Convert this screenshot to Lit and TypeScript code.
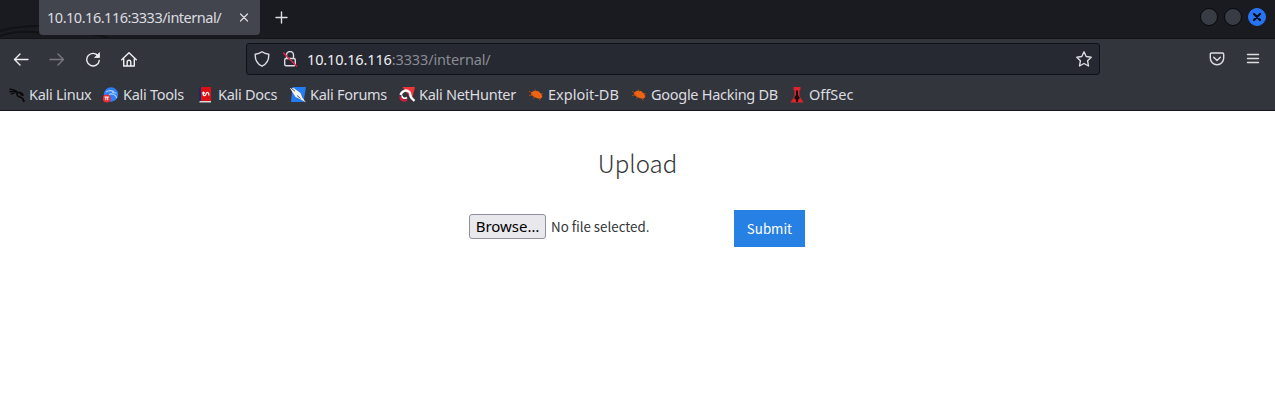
import { LitElement, html, css, svg } from "lit";
import { customElement } from "lit/decorators.js";

const kali = svg`<path d="M.5 2l4 .8 4 2M.3 4.500l5 .2M1.500 7.200l4-1.200" fill="none" stroke="#08090b" stroke-width="1.300"/><path d="M4 4c3 .2 3.500 1 4 2.200 0 3 1 3.300 3 3.800 2 .5 3.300 2 4 5M9 5.800c2-.8 3.500-.2 5 2.200l-2.700-.6" fill="none" stroke="#08090b" stroke-width="1.800"/>`;
const tools = svg`<circle cx="8" cy="7.500" r="7.200" fill="#2f80f5"/><path d="M3 5c3-2 6-1.500 8-.2M6 7.500c2-1.200 3.500-.7 5 0 1.500.6 2.300 1.600 2.700 3.700M9 5l4.500 1.300" fill="none" stroke="#a9cef9" stroke-width="1.100"/><circle cx="3.700" cy="11.500" r="4" fill="#ee2b31"/><path d="M1.500 10h4.400M2.800 10v3.200M4.700 10v3.200" stroke="#fff" stroke-width="1" fill="none"/>`;
const docs = svg`<path d="M1 0h2.500v15H1z" fill="#182c6b"/><path d="M3 0h10v14H3z" fill="#dd1016"/><path d="M1.500 14H13v1.500H1.500z" fill="#dad8d8"/><path d="M5.300 5.500c-.8 4 2.500 4 2.700 1.500.2-2.500 3.500-2 2.700 1.500M4.300 6.500l1.200-1.300 1.300 1.300" fill="none" stroke="#fff" stroke-width="1.200"/>`;
const forums = svg`<path d="M2.500 0H16l-2.500 15H1z" fill="#237cf2"/><path d="M0 1l4 .2L10.500 6l1.700 4.500 3.800 5-5.500-3.300-5-2.200L3 6z" fill="#f5f5f5"/><path d="M1 1.200l4 3M7 8.500l3.500 2.800" stroke="#303238" stroke-width=".8"/>`;
const hunter = svg`<path d="M3.500 0H16l-3 12-4-4z" fill="#f1333b"/><path d="M1.500 8C3 3.500 7.500 2.500 10.200 4.800c1.800 1.700.5 4.200 2.300 6.200 1 1.200 2 1.700 3 3" fill="none" stroke="#fff" stroke-width="2.400"/><path d="M1.500 9.500c0 4 3.500 4.700 6.500 3.200" fill="none" stroke="#d9163e" stroke-width="2.400"/><path d="M3 8.500c0 3 3 3.300 5 2" fill="none" stroke="#fff" stroke-width="1.600"/><path d="M5 7.800c1.500-1.300 3.500-1.300 4 .5" fill="none" stroke="#33353c" stroke-width="1.300"/>`;
const bug = svg`<path d="M3 5.500l3-1.700 4 .2 3.500 3 .8 3-1.800 1.700-3.500-.5-4-2L3 7.500z" fill="#ef6412"/><path d="M1 4.200l3 2M7 2.300l1 2M1 8.500l4-.4M5 11.500l2-1.300M11 12l1.500 1.500M13 7l2-.3" stroke="#a94b18" stroke-width=".9"/>`;
const offsec = svg`<path d="M4.500 0h7v2.500l-1 1v5.500l4 6.500h-13l4-6.500V3.500l-1-1z" fill="#df2329"/><path d="M7 3.500h2v4.500l1.800 3-1.800 2V15H7v-2l-1.800-2L7 8z" fill="#180c10"/>`;

const bookmarks = [
  { name: "Kali Linux", icon: kali, width: 94 },
  { name: "Kali Tools", icon: tools, width: 95 },
  { name: "Kali Docs", icon: docs, width: 92 },
  { name: "Kali Forums", icon: forums, width: 109 },
  { name: "Kali NetHunter", icon: hunter, width: 129 },
  { name: "Exploit-DB", icon: bug, width: 103, wide: true },
  { name: "Google Hacking DB", icon: bug, width: 158 },
  { name: "OffSec", icon: offsec, width: 80, wide: true },
];

@customElement("app-root")
export class AppRoot extends LitElement {
  static styles = css`
    :host { display: block; height: 400px; background: #fff; font-family: "Noto Sans", sans-serif; font-size: 14.500px; line-height: 20px; color: #dcdde0; overflow: hidden; }
    * { box-sizing: border-box; }
    svg { display: block; flex: none; fill: none; stroke: currentColor; stroke-width: 1.400; stroke-linecap: round; stroke-linejoin: round; }
    .tabs { position: relative; display: flex; height: 39px; background: #1a1b20; border-bottom: 1px solid #131418; padding-left: 39px; }
    .swirl { position: absolute; left: 0; top: 0; color: #111216; }
    .tab { position: relative; display: flex; align-items: center; justify-content: space-between; width: 221px; height: 35px; padding: 0 11px 0 8px; background: #42454d; border-radius: 0 0 4px 4px; letter-spacing: -.48px; }
    .title, .label { padding-bottom: 2px; }
    .new { margin: 11px 0 0 15px; }
    .controls { display: flex; gap: 6px; margin: 8px 9px 0 auto; }
    .dot { width: 18px; height: 18px; border-radius: 50%; background: #383c45; border: 1px solid #08090b; }
    .close { background: #2774f2; border-color: #2774f2; color: #080d18; }
    .toolbar { display: flex; align-items: center; height: 41px; padding-bottom: 1px; background: #33353c; }
    .nav { display: flex; gap: 20px; width: 246px; padding-left: 13px; color: #f0f0f3; }
    .nav .off { color: #777980; }
    .address { display: flex; align-items: center; width: 854px; height: 32px; padding: 0 7px 0 7px; border: 1px solid #0f1118; border-radius: 3px; background: #262832; }
    .lock { margin-left: 12px; }
    .url { margin-left: 9px; padding-bottom: 1px; color: #f0f0f3; letter-spacing: -.13px; }
    .rest { color: #8a8c93; }
    .star { margin-left: auto; }
    .right { display: flex; gap: 20px; margin-left: 109px; }
    .bookmarks { display: flex; height: 31px; padding-left: 9px; background: #33353c; border-bottom: 1px solid #14151a; letter-spacing: -.28px; }
    .mark { display: flex; align-items: center; gap: 4px; height: 30px; white-space: nowrap; }
    .wide { letter-spacing: 0; }
    .icon { stroke: none; stroke-linecap: butt; }
    .page { display: flex; flex-direction: column; align-items: center; color: #333639; font-family: "Noto Sans CJK SC", sans-serif; }
    h1 { margin: 34px 0 0; font-size: 24px; line-height: 36px; font-weight: 300; }
    .form { display: flex; width: 337px; margin: 29px 0 0; padding-right: 1px; align-items: flex-start; }
    button { font: inherit; padding: 0; white-space: nowrap; }
    .browse { width: 77px; height: 25px; margin-top: 4px; border: 1px solid #8f8f9d; border-radius: 3px; background: #e9e9ed; color: #000; font-family: "Noto Sans", sans-serif; font-size: 15px; line-height: 21px; }
    .status { margin: 4px 0 0 5px; font-size: 13.333px; line-height: 25px; }
    .submit { width: 71px; height: 37px; margin-left: auto; border: 0; background: #2780e3; color: #fff; font-size: 13.333px; }
  `;

  render() {
    return html`
      <div class="tabs">
        <svg class="swirl" width="120" height="38" viewBox="0 0 120 38"><path d="M0 31c12-4 26-5 42-5M0 36c14-5 28-5 42-3M90 34q10 1 18 4" stroke-width="2"/></svg>
        <div class="tab"><span class="title">10.10.16.116:3333/internal/</span>
          <svg width="10" height="10" viewBox="0 0 10 10"><path d="M1.500 1l7 7m0-7l-7 7" stroke-width="1.200"/></svg></div>
        <svg class="new" width="13" height="13" viewBox="0 0 13 13"><path d="M6.500 1v11M1 6.500h11"/></svg>
        <div class="controls"><span class="dot"></span><span class="dot"></span>
          <span class="dot close"><svg width="16" height="16" viewBox="0 0 16 16"><path d="M5 5l6 6m0-6l-6 6" stroke-width="2.200"/></svg></span></div>
      </div>
      <div class="toolbar">
        <div class="nav">
          <svg width="16" height="16" viewBox="0 0 16 16"><path d="M15 8.500H1.500M7 3L1.500 8.500 7 14"/></svg>
          <svg class="off" width="16" height="16" viewBox="0 0 16 16"><path d="M1 8.500h13.500M9 3l5.500 5.500L9 14"/></svg>
          <svg width="16" height="16" viewBox="0 0 16 16"><path d="M13.200 5A6.300 6.300 0 1 0 14.300 9.500"/><path d="M14.500 2v4.500H10z" fill="currentColor" stroke-width=".8"/></svg>
          <svg width="16" height="16" viewBox="0 0 16 16"><path d="M.7 8.700l7.300-7 7.300 7M2.700 7.500V15h10.600V7.500M6.200 15v-4a1.800 1.800 0 0 1 3.600 0v4"/></svg>
        </div>
        <div class="address">
          <svg width="16" height="16" viewBox="0 0 16 16"><path d="M8 .8C6 2.200 4 2.900 1.200 3.200c-.2 5.400 1 9.300 6.800 12 5.800-2.700 7-6.600 6.800-12C12 2.900 10 2.200 8 .8z"/></svg>
          <svg class="lock" width="16" height="16" viewBox="0 0 16 16"><path d="M4.500 7V4a3.500 3.500 0 0 1 7 0v3"/><rect x="2.700" y="7.500" width="10.600" height="7.300" rx="1.500"/><path d="M1.500 2l13 13" stroke="#e22850"/></svg>
          <span class="url">10.10.16.116<span class="rest">:3333/internal/</span></span>
          <svg class="star" width="16" height="16" viewBox="0 0 16 16"><path d="M8 .8l2.200 4.700 5 .7-3.600 3.600.9 5.200L8 12.500 3.500 15l.9-5.200L.8 6.200l5-.7z"/></svg>
        </div>
        <div class="right">
          <svg width="16" height="16" viewBox="0 0 16 16"><path d="M2.500 2h11q1.200 0 1.200 1.200V7a6.700 6.700 0 0 1-13.400 0V3.200Q1.300 2 2.500 2zM4.700 6.200L8 9.400l3.300-3.200"/></svg>
          <svg width="16" height="16" viewBox="0 0 16 16"><path d="M2.500 3.500h11M2.500 7.500h11M2.500 11.500h11"/></svg>
        </div>
      </div>
      <div class="bookmarks">${bookmarks.map(
        (b) => html`<div class="mark ${b.wide ? "wide" : ""}" style="width:${b.width}px"><svg class="icon" width="16" height="16" viewBox="0 0 16 16">${b.icon}</svg><span class="label">${b.name}</span></div>`
      )}</div>
      <div class="page">
        <h1>Upload</h1>
        <div class="form"><button class="browse">Browse…</button><span class="status">No file selected.</span><button class="submit">Submit</button></div>
      </div>`;
  }
}
